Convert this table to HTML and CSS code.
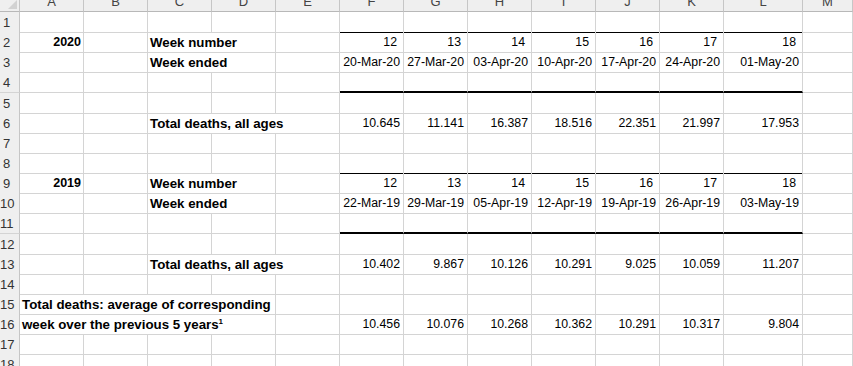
FILE: index.html
```html
<!DOCTYPE html>
<html>
<head>
<meta charset="utf-8">
<link rel="stylesheet" href="styles.css">
</head>
<body>
<div class="sheet">
  <div class="row hdr">
    <div class="corner"><span class="tri"></span></div>
    <div class="ch"><span>A</span></div><div class="ch"><span>B</span></div><div class="ch"><span>C</span></div><div class="ch"><span>D</span></div><div class="ch"><span>E</span></div><div class="ch"><span>F</span></div><div class="ch"><span>G</span></div><div class="ch"><span>H</span></div><div class="ch"><span>I</span></div><div class="ch"><span>J</span></div><div class="ch"><span>K</span></div><div class="ch"><span>L</span></div><div class="ch"><span>M</span></div>
  </div>

  <div class="row"><div class="rh">1</div><div class="c"></div><div class="c"></div><div class="c"></div><div class="c"></div><div class="c"></div><div class="c bt"></div><div class="c bt"></div><div class="c bt"></div><div class="c bt"></div><div class="c bt"></div><div class="c bt"></div><div class="c bt"></div><div class="c"></div></div>

  <div class="row"><div class="rh">2</div><div class="c r bn">2020</div><div class="c"></div><div class="c lbl s2">Week number</div><div class="c"></div><div class="c r wk">12</div><div class="c r wk">13</div><div class="c r wk">14</div><div class="c r wk">15</div><div class="c r wk">16</div><div class="c r wk">17</div><div class="c r wk">18</div><div class="c"></div></div>

  <div class="row"><div class="rh">3</div><div class="c"></div><div class="c"></div><div class="c lbl s2">Week ended</div><div class="c"></div><div class="c r">20-Mar-20</div><div class="c r">27-Mar-20</div><div class="c r">03-Apr-20</div><div class="c r">10-Apr-20</div><div class="c r">17-Apr-20</div><div class="c r">24-Apr-20</div><div class="c r">01-May-20</div><div class="c"></div></div>

  <div class="row tall"><div class="rh">4</div><div class="c"></div><div class="c"></div><div class="c"></div><div class="c"></div><div class="c"></div><div class="c bb2"></div><div class="c bb2"></div><div class="c bb2"></div><div class="c bb2"></div><div class="c bb2"></div><div class="c bb2"></div><div class="c bb2"></div><div class="c"></div></div>

  <div class="row"><div class="rh">5</div><div class="c"></div><div class="c"></div><div class="c"></div><div class="c"></div><div class="c"></div><div class="c"></div><div class="c"></div><div class="c"></div><div class="c"></div><div class="c"></div><div class="c"></div><div class="c"></div><div class="c"></div></div>

  <div class="row"><div class="rh">6</div><div class="c"></div><div class="c"></div><div class="c lbl s3">Total deaths, all ages</div><div class="c r">10.645</div><div class="c r">11.141</div><div class="c r">16.387</div><div class="c r">18.516</div><div class="c r">22.351</div><div class="c r">21.997</div><div class="c r">17.953</div><div class="c"></div></div>

  <div class="row"><div class="rh">7</div><div class="c"></div><div class="c"></div><div class="c"></div><div class="c"></div><div class="c"></div><div class="c"></div><div class="c"></div><div class="c"></div><div class="c"></div><div class="c"></div><div class="c"></div><div class="c"></div><div class="c"></div></div>

  <div class="row"><div class="rh">8</div><div class="c"></div><div class="c"></div><div class="c"></div><div class="c"></div><div class="c"></div><div class="c bt"></div><div class="c bt"></div><div class="c bt"></div><div class="c bt"></div><div class="c bt"></div><div class="c bt"></div><div class="c bt"></div><div class="c"></div></div>

  <div class="row"><div class="rh">9</div><div class="c r bn">2019</div><div class="c"></div><div class="c lbl s2">Week number</div><div class="c"></div><div class="c r wk">12</div><div class="c r wk">13</div><div class="c r wk">14</div><div class="c r wk">15</div><div class="c r wk">16</div><div class="c r wk">17</div><div class="c r wk">18</div><div class="c"></div></div>

  <div class="row"><div class="rh">10</div><div class="c"></div><div class="c"></div><div class="c lbl s2">Week ended</div><div class="c"></div><div class="c r">22-Mar-19</div><div class="c r">29-Mar-19</div><div class="c r">05-Apr-19</div><div class="c r">12-Apr-19</div><div class="c r">19-Apr-19</div><div class="c r">26-Apr-19</div><div class="c r">03-May-19</div><div class="c"></div></div>

  <div class="row tall"><div class="rh">11</div><div class="c"></div><div class="c"></div><div class="c"></div><div class="c"></div><div class="c"></div><div class="c bb2"></div><div class="c bb2"></div><div class="c bb2"></div><div class="c bb2"></div><div class="c bb2"></div><div class="c bb2"></div><div class="c bb2"></div><div class="c"></div></div>

  <div class="row"><div class="rh">12</div><div class="c"></div><div class="c"></div><div class="c"></div><div class="c"></div><div class="c"></div><div class="c"></div><div class="c"></div><div class="c"></div><div class="c"></div><div class="c"></div><div class="c"></div><div class="c"></div><div class="c"></div></div>

  <div class="row"><div class="rh">13</div><div class="c"></div><div class="c"></div><div class="c lbl s3">Total deaths, all ages</div><div class="c r">10.402</div><div class="c r">9.867</div><div class="c r">10.126</div><div class="c r">10.291</div><div class="c r">9.025</div><div class="c r">10.059</div><div class="c r">11.207</div><div class="c"></div></div>

  <div class="row"><div class="rh">14</div><div class="c"></div><div class="c"></div><div class="c"></div><div class="c"></div><div class="c"></div><div class="c"></div><div class="c"></div><div class="c"></div><div class="c"></div><div class="c"></div><div class="c"></div><div class="c"></div><div class="c"></div></div>

  <div class="row"><div class="rh">15</div><div class="c lbl s4">Total deaths: average of corresponding</div><div class="c"></div><div class="c"></div><div class="c"></div><div class="c"></div><div class="c"></div><div class="c"></div><div class="c"></div><div class="c"></div><div class="c"></div></div>

  <div class="row"><div class="rh">16</div><div class="c lbl s4">week over the previous 5 years<sup class="fn">1</sup></div><div class="c"></div><div class="c r">10.456</div><div class="c r">10.076</div><div class="c r">10.268</div><div class="c r">10.362</div><div class="c r">10.291</div><div class="c r">10.317</div><div class="c r">9.804</div><div class="c"></div></div>

  <div class="row"><div class="rh">17</div><div class="c"></div><div class="c"></div><div class="c"></div><div class="c"></div><div class="c"></div><div class="c"></div><div class="c"></div><div class="c"></div><div class="c"></div><div class="c"></div><div class="c"></div><div class="c"></div><div class="c"></div></div>

  <div class="row"><div class="rh">18</div><div class="c"></div><div class="c"></div><div class="c"></div><div class="c"></div><div class="c"></div><div class="c"></div><div class="c"></div><div class="c"></div><div class="c"></div><div class="c"></div><div class="c"></div><div class="c"></div><div class="c"></div></div>
</div>
</body>
</html>
```

FILE: styles.css
```css
* { box-sizing: border-box; }
html, body {
  margin: 0;
  padding: 0;
  background: #ffffff;
  overflow: hidden;
}
.sheet {
  width: 853px;
  height: 366px;
  overflow: hidden;
  font-family: "Liberation Sans", Arial, sans-serif;
  color: #000;
}
.row {
  display: grid;
  grid-template-columns: 20px repeat(11, 64px) 79px 1fr;
  height: 20px;
}
.row.tall { height: 21px; }
.row.hdr { height: 12px; }

.corner {
  position: relative;
  background: #efefef;
  border-right: 1px solid #c6c6c6;
  border-bottom: 1px solid #b8b8b8;
  overflow: hidden;
}
.tri {
  position: absolute;
  right: 2px;
  bottom: 2px;
  width: 0;
  height: 0;
  border-left: 9px solid transparent;
  border-bottom: 9px solid #d2d2d2;
}
.ch {
  background: #efefef;
  border-right: 1px solid #c6c6c6;
  border-bottom: 1px solid #b8b8b8;
  overflow: hidden;
  text-align: center;
  font-size: 13px;
  color: #444;
}
.ch span {
  display: block;
  line-height: 13px;
  margin-top: -5px;
}
.rh {
  background: #efefef;
  border-right: 1px solid #c6c6c6;
  border-bottom: 1px solid #d4d4d4;
  font-size: 13px;
  line-height: 19px;
  padding: 1px 6px 0 0;
  text-align: center;
  color: #333;
  white-space: nowrap;
}
.c {
  border-right: 1px solid #d4d4d4;
  border-bottom: 1px solid #d4d4d4;
  font-size: 12.3px;
  line-height: 19px;
  padding: 1px 3px 0 2px;
  white-space: nowrap;
}
.r { text-align: right; }
.wk { padding-right: 6px; }
.bn {
  font-weight: bold;
  font-size: 12.5px;
  padding-right: 2px;
}
.lbl {
  font-weight: bold;
  font-size: 13.3px;
  padding-left: 2px;
}
.s2 { grid-column: span 2; }
.s3 { grid-column: span 3; }
.s4 { grid-column: span 4; }
.bt { border-bottom-color: #000; }
.bb2 { border-bottom: 2px solid #000; }
.fn {
  font-size: 8px;
  line-height: 0;
  vertical-align: 5px;
}
```
